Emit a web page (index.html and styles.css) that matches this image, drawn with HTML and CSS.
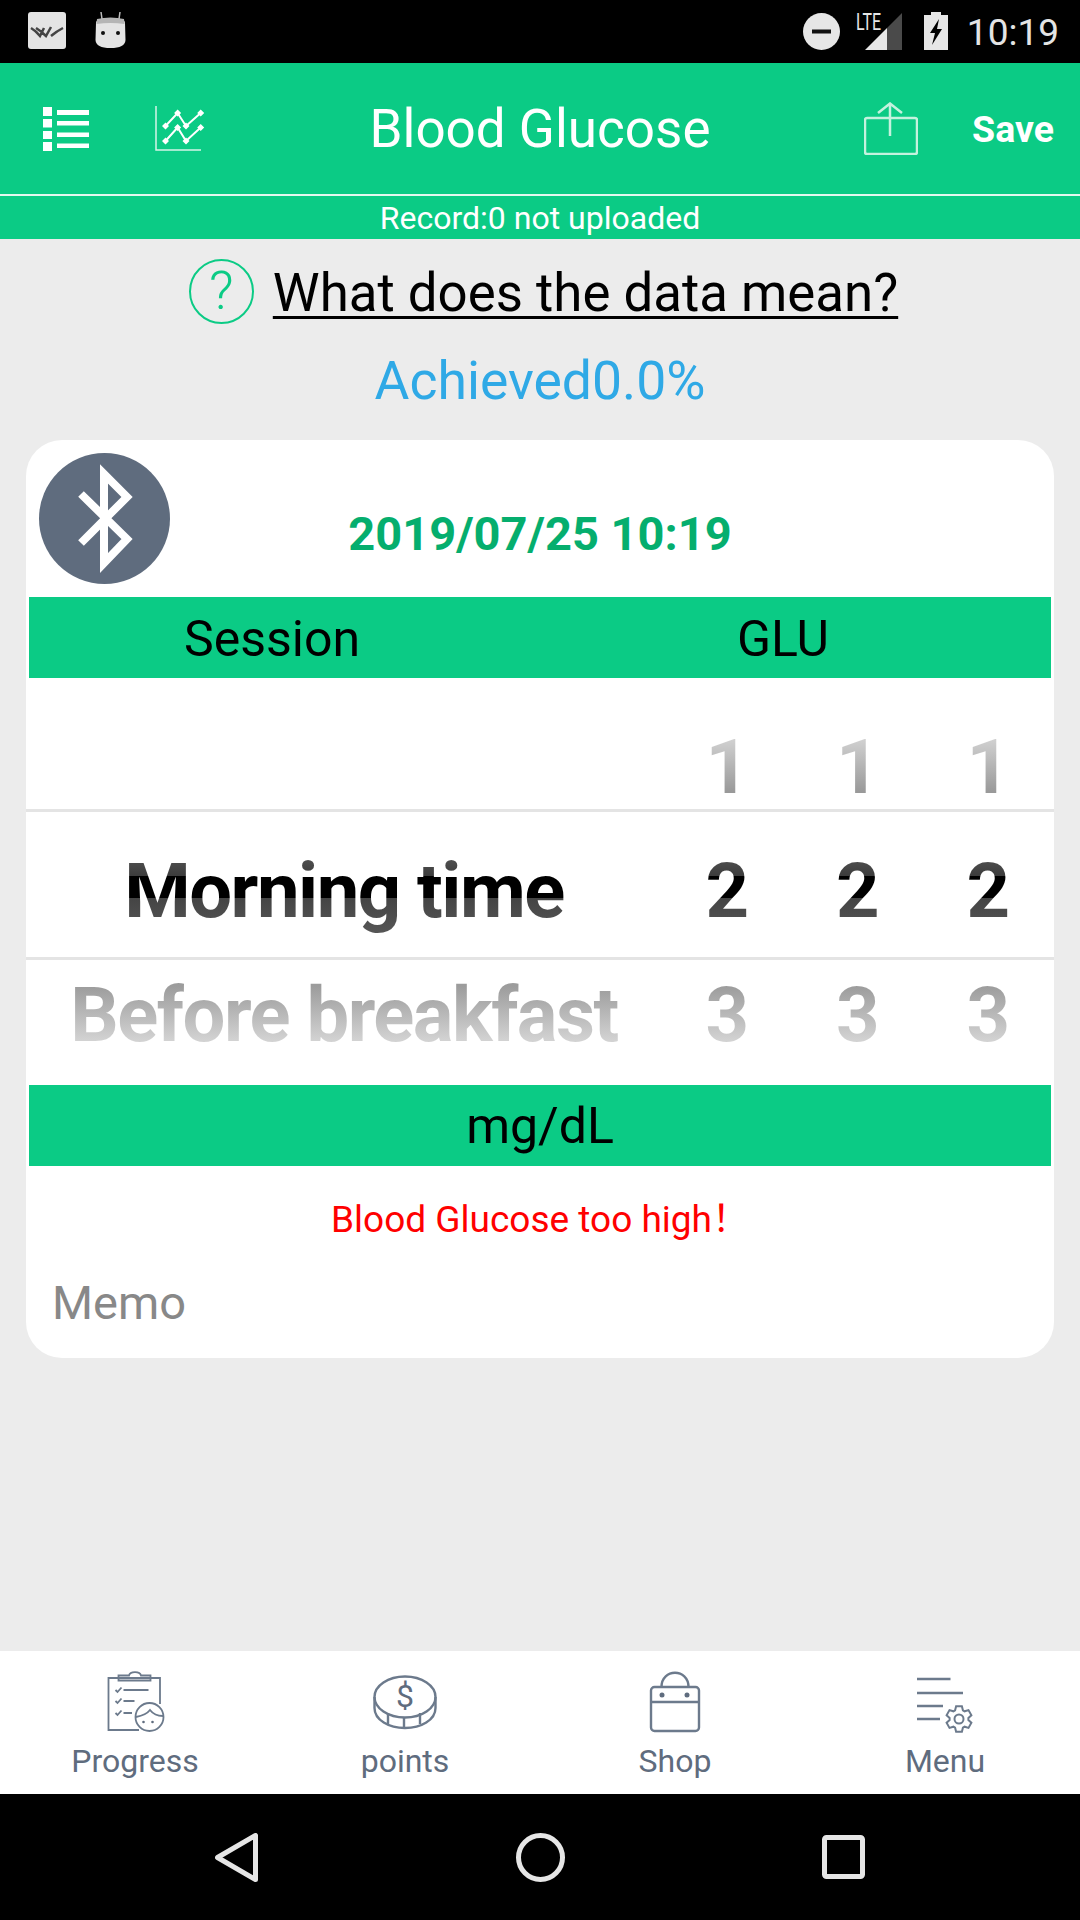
FILE: index.html
```html
<!DOCTYPE html>
<html lang="en">
<head>
    <meta charset="UTF-8">
    <meta name="viewport" content="width=device-width, initial-scale=1.0">
    <title>Blood Glucose</title>
    <link rel="stylesheet" href="styles.css">
</head>
<body>
<div class="app">

    <div class="statusbar">
        <div class="status-left">
            <svg width="38" height="37" viewBox="0 0 38 37">
                <rect width="38" height="37" rx="3" fill="#e4e4e4"/>
                <path d="M3 16 Q8 19 12 24 L16 16 M8 16 Q13 19 18 24 L23 15 M23 24 Q29 19 35 16" fill="none" stroke="#444" stroke-width="2.500"/>
            </svg>
            <svg width="31" height="36" viewBox="0 0 31 36">
                <path d="M7 7 L6 0 M24 7 L25 0" stroke="#bbb" stroke-width="1.500"/>
                <path d="M1 11 Q1 6 15.500 6 Q30 6 30 11 L30.500 28 Q30 36 15.500 36 Q1 36 0.500 28 Z" fill="#e4e4e4"/>
                <path d="M2 7 Q15.500 4 29 7 L29.500 12 Q15.500 10 1.500 12 Z" fill="#b5b5b5"/>
                <circle cx="8" cy="21" r="2" fill="#111"/>
                <circle cx="23" cy="21" r="2" fill="#111"/>
            </svg>
        </div>
        <div class="status-right">
            <svg class="st-dnd" width="37" height="37" viewBox="0 0 37 37">
                <circle cx="18.500" cy="18.500" r="18.500" fill="#e6e6e6"/>
                <rect x="9" y="16.500" width="19" height="4" fill="#111"/>
            </svg>
            <svg class="st-signal" width="46" height="44" viewBox="0 -6 46 44">
                <text x="0" y="17" class="lte" textLength="25" lengthAdjust="spacingAndGlyphs">LTE</text>
                <path d="M9 37 L31 15 V37 Z" fill="#e6e6e6"/>
                <path d="M31 15 L46 0 V37 H31 Z" fill="#4a4a4a"/>
            </svg>
            <svg class="st-battery" width="24" height="38" viewBox="0 0 24 38">
                <path d="M7 0 H17 V3 H24 V38 H0 V3 H7 Z" fill="#e6e6e6"/>
                <path d="M15 7 L6 21 H11 L8 33 L18 17 H13 Z" fill="#000"/>
            </svg>
            <span class="st-time">10:19</span>
        </div>
    </div>

    <div class="toolbar">
        <div class="toolbar-left">
            <svg width="46" height="44" viewBox="0 0 46 44" fill="#fff">
                <rect x="0" y="0" width="9" height="9"/>
                <rect x="0" y="12" width="9" height="8.500"/>
                <rect x="0" y="24" width="9" height="8"/>
                <rect x="0" y="35" width="9" height="9"/>
                <rect x="14" y="3" width="32" height="5"/>
                <rect x="14" y="14" width="32" height="4.500"/>
                <rect x="14" y="25.500" width="32" height="4.500"/>
                <rect x="14" y="36.500" width="32" height="4.500"/>
            </svg>
            <svg width="50" height="45" viewBox="0 0 50 45">
                <path d="M1 0 V44 H46" fill="none" stroke="#d5f5e8" stroke-width="1.500"/>
                <path d="M10.500 20 L22.600 7 L31 20 L45.700 7 M10.500 35 L22.600 21.500 L31 35 L45.700 21.500" fill="none" stroke="#fff" stroke-width="2"/>
                <path d="M10.500 16.500 l3.500 3.500 -3.500 3.500 -3.500 -3.500 Z M22.600 3.500 l3.500 3.500 -3.500 3.500 -3.500 -3.500 Z M31 16.500 l3.500 3.500 -3.500 3.500 -3.500 -3.500 Z M45.700 3.500 l3.500 3.500 -3.500 3.500 -3.500 -3.500 Z M10.500 31.500 l3.500 3.500 -3.500 3.500 -3.500 -3.500 Z M22.600 18 l3.500 3.500 -3.500 3.500 -3.500 -3.500 Z M31 31.500 l3.500 3.500 -3.500 3.500 -3.500 -3.500 Z M45.700 18 l3.500 3.500 -3.500 3.500 -3.500 -3.500 Z" fill="#fff"/>
            </svg>
        </div>
        <div class="toolbar-title">Blood Glucose</div>
        <div class="toolbar-right">
            <svg width="54" height="53" viewBox="0 0 54 53">
                <rect x="1" y="16" width="52" height="36" rx="2" fill="none" stroke="#c4f2de" stroke-width="2.500"/>
                <path d="M26 2 V34 M14 11 L26 1.500 L38 11" fill="none" stroke="#c4f2de" stroke-width="2.500"/>
            </svg>
            <span class="save">Save</span>
        </div>
    </div>
    <div class="subbar">Record:0 not uploaded</div>

    <div class="main">
        <div class="help-row">
            <span class="help-icon">?</span>
            <span class="help-text">What does the data mean?</span>
        </div>
        <div class="achieved">Achieved0.0%</div>

        <div class="card">
            <div class="card-head">
                <div class="bt-badge">
                    <svg width="131" height="131" viewBox="0 0 131 131">
                        <circle cx="65.500" cy="65.500" r="65.500" fill="#5f6c7e"/>
                        <path d="M42 41 L88 86 L65 110 V21 L88 44 L42 90" fill="none" stroke="#fff" stroke-width="8"/>
                    </svg>
                </div>
                <div class="date">2019/07/25 10:19</div>
            </div>

            <div class="band band-split">
                <span>Session</span>
                <span>GLU</span>
            </div>

            <div class="wheel">
                <div class="wheel-line line-a"></div>
                <div class="wheel-line line-b"></div>
                <div class="wheel-row">
                    <span></span>
                    <span><span class="fade-top">1</span></span>
                    <span><span class="fade-top">1</span></span>
                    <span><span class="fade-top">1</span></span>
                </div>
                <div class="wheel-row">
                    <span class="wheel-name"><span class="fade-mid">Morning time</span></span>
                    <span><span class="fade-mid">2</span></span>
                    <span><span class="fade-mid">2</span></span>
                    <span><span class="fade-mid">2</span></span>
                </div>
                <div class="wheel-row">
                    <span class="wheel-name"><span class="fade-low">Before breakfast</span></span>
                    <span><span class="fade-low">3</span></span>
                    <span><span class="fade-low">3</span></span>
                    <span><span class="fade-low">3</span></span>
                </div>
            </div>

            <div class="band">mg/dL</div>
            <div class="warning">Blood Glucose too high！</div>
            <div class="memo">Memo</div>
        </div>
    </div>

    <div class="tabbar">
        <div class="tab">
            <svg width="64" height="64" viewBox="0 0 64 64" class="tab-icon">
                <path d="M57 34 V8 H5.500 V60 H36"/>
                <path d="M15.500 5.500 H26 C27 1 37 1 38 5.500 H47.500 V10.500 H15.500 Z"/>
                <path d="M12.500 20 L14.500 22 L18.500 17.500 M12.500 31 L14.500 33 L18.500 28.500 M12.500 43 L14.500 45 L18.500 40.500"/>
                <path d="M20.500 20 H45.500 M20.500 31 H31.500 M20.500 43 H29"/>
                <circle cx="46.500" cy="47" r="14"/>
                <path d="M33 47 C38 46 44 44 47 40 C50 44 55 46 60 46"/>
                <circle class="dot" cx="40.500" cy="52" r="1.300"/>
                <circle class="dot" cx="49.500" cy="52" r="1.300"/>
            </svg>
            <span class="tab-label">Progress</span>
        </div>
        <div class="tab">
            <svg width="64" height="64" viewBox="0 0 64 64" class="tab-icon heavy">
                <ellipse cx="32" cy="27" rx="30.500" ry="20.500"/>
                <path d="M1.500 27 V38 C1.500 50 16 58 32 58 C48 58 62.500 50 62.500 38 V27"/>
                <path d="M15 43 V54 M31 47.500 V58 M47 43 V54"/>
                <text x="32" y="37" class="coin-sign" text-anchor="middle">$</text>
            </svg>
            <span class="tab-label">points</span>
        </div>
        <div class="tab">
            <svg width="64" height="64" viewBox="0 0 64 64" class="tab-icon heavy">
                <rect x="8" y="17" width="48" height="44" rx="3.500"/>
                <path d="M8 32 H56"/>
                <path d="M18.500 17 C18.500 -2 45.500 -2 45.500 17"/>
                <circle class="dot" cx="19" cy="25" r="2.500"/>
                <circle class="dot" cx="44" cy="25" r="2.500"/>
            </svg>
            <span class="tab-label">Shop</span>
        </div>
        <div class="tab">
            <svg width="64" height="64" viewBox="0 0 64 64" class="tab-icon heavy">
                <path d="M4 9 H37.500 M4 23 H50 M4 36 H30 M4 49 H27"/>
                <g transform="translate(46 49)" class="thin">
                    <path d="M-2.900 -12.700 L2.900 -12.700 L3.900 -8.700 L5.600 -7.700 L9.500 -8.900 L12.400 -3.800 L9.400 -1 L9.400 1 L12.400 3.800 L9.500 8.900 L5.600 7.700 L3.900 8.700 L2.900 12.700 L-2.900 12.700 L-3.900 8.700 L-5.600 7.700 L-9.500 8.900 L-12.400 3.800 L-9.400 1 L-9.400 -1 L-12.400 -3.800 L-9.500 -8.900 L-5.600 -7.700 L-3.900 -8.700 Z"/>
                    <circle r="4.500"/>
                </g>
            </svg>
            <span class="tab-label">Menu</span>
        </div>
    </div>

    <div class="sysnav">
        <svg width="43" height="49" viewBox="0 0 43 49">
            <path d="M40.500 2.500 V46.500 L2.500 24.500 Z" fill="none" stroke="#e6e6e6" stroke-width="5" stroke-linejoin="round"/>
        </svg>
        <svg width="49" height="49" viewBox="0 0 49 49">
            <circle cx="24.500" cy="24.500" r="22" fill="none" stroke="#e6e6e6" stroke-width="5"/>
        </svg>
        <svg width="43" height="44" viewBox="0 0 43 44">
            <rect x="2.500" y="2.500" width="38" height="39" rx="2" fill="none" stroke="#e6e6e6" stroke-width="5"/>
        </svg>
    </div>

</div>
</body>
</html>
```

FILE: styles.css
```css
* {
    box-sizing: border-box;
}
body {
    margin: 0;
    background-color: black;
    font-family: Roboto, "Noto Sans CJK SC", sans-serif;
}
svg {
    display: block;
}
.app {
    width: 1080px;
    height: 1920px;
    display: flex;
    flex-direction: column;
}

/* status bar */
.statusbar {
    height: 63px;
    flex: none;
    background-color: black;
    display: flex;
    justify-content: space-between;
    padding: 12px 21px 0 28px;
}
.status-left {
    display: flex;
    gap: 29px;
    align-items: flex-start;
}
.status-right {
    display: flex;
    align-items: flex-start;
}
.st-dnd {
    margin-top: 1px;
}
.st-signal {
    margin-left: 16px;
    margin-top: -5px;
}
.st-battery {
    margin-left: 22px;
}
.st-time {
    margin-left: 19px;
    font-size: 37px;
    line-height: 42px;
    color: #e4e4e4;
}
.lte {
    font-family: Roboto, sans-serif;
    font-size: 24px;
    fill: #e6e6e6;
}

/* toolbar */
.toolbar {
    height: 133px;
    flex: none;
    background-color: #0bcb85;
    border-bottom: 2px solid #e4f8ef;
    display: grid;
    grid-template-columns: 1fr auto 1fr;
    align-items: center;
}
.toolbar-left {
    display: flex;
    align-items: center;
    gap: 66px;
    padding-left: 43px;
}
.toolbar-title {
    font-size: 53px;
    color: white;
    padding-top: 1px;
}
.toolbar-right {
    display: flex;
    align-items: center;
    justify-content: flex-end;
    gap: 54px;
    padding-right: 26px;
}
.save {
    font-size: 37.500px;
    font-weight: bold;
    color: white;
}
.subbar {
    height: 43px;
    flex: none;
    background-color: #0bcb85;
    color: white;
    font-size: 32px;
    line-height: 44px;
    text-align: center;
}

/* main area */
.main {
    flex: 1;
    background-color: #ececec;
    padding: 20px 26px 0;
}
.help-row {
    display: flex;
    justify-content: center;
    align-items: center;
    gap: 19px;
    height: 65px;
    padding-left: 7px;
}
.help-icon {
    width: 65px;
    height: 65px;
    border: 2.500px solid #0bcb85;
    border-radius: 50%;
    color: #0bcb85;
    font-size: 54px;
    font-weight: 300;
    line-height: 60px;
    text-align: center;
}
.help-text {
    font-size: 52.800px;
    color: black;
    padding-top: 2px;
    text-decoration: underline;
    text-decoration-thickness: 3px;
    text-underline-offset: 5px;
}
.achieved {
    margin-top: 26px;
    font-size: 53.500px;
    line-height: 61px;
    text-align: center;
    color: #2fa9e6;
}

/* card */
.card {
    margin-top: 29px;
    height: 918px;
    background-color: white;
    border-radius: 36px;
    overflow: hidden;
}
.card-head {
    height: 157px;
    display: grid;
    grid-template-columns: 1fr auto 1fr;
}
.bt-badge {
    padding: 13px 0 0 13px;
}
.date {
    grid-column: 2;
    font-size: 47px;
    font-weight: bold;
    line-height: 54px;
    color: #05ae6e;
    padding-top: 67px;
}
.band {
    height: 81px;
    margin: 0 3px;
    background-color: #0bcb85;
    color: black;
    font-size: 50px;
    line-height: 83px;
    text-align: center;
}
.band-split {
    display: grid;
    grid-template-columns: 486px 1fr;
    line-height: 85px;
}

/* picker wheel */
.wheel {
    position: relative;
    height: 407px;
    padding: 27px 0 0 4px;
}
.wheel-line {
    position: absolute;
    left: 0;
    right: 0;
    height: 3px;
    background-color: #e4e4e4;
}
.line-a {
    top: 131px;
}
.line-b {
    top: 279px;
}
.wheel-row {
    display: grid;
    grid-template-columns: 632px repeat(3, 130.5px);
    height: 124px;
    line-height: 124px;
    font-size: 76px;
    font-weight: bold;
    text-align: center;
}
.wheel-name {
    letter-spacing: -1.500px;
    padding-right: 4px;
}
.fade-top,
.fade-mid,
.fade-low {
    color: transparent;
    -webkit-background-clip: text;
    background-clip: text;
}
.fade-top {
    background-image: linear-gradient(#d2d2d2 16px, #999 70px);
}
.fade-mid {
    background-image: linear-gradient(#4c4c4c 16px, #3c3c3c 30px, black 30px, black 52px, #444 52px, #555 85px);
}
.fade-low {
    background-image: linear-gradient(#9c9c9c 16px, #d2d2d2 70px);
}

.warning {
    margin-top: 32px;
    font-size: 37px;
    line-height: 44px;
    text-align: center;
    color: #ff0000;
}
.memo {
    margin-top: 35px;
    padding-left: 26px;
    font-size: 47px;
    line-height: 52px;
    color: #888;
}

/* bottom tabs */
.tabbar {
    height: 143px;
    flex: none;
    background-color: white;
    display: grid;
    grid-template-columns: repeat(4, 1fr);
    padding-top: 19px;
}
.tab {
    display: flex;
    flex-direction: column;
    align-items: center;
}
.tab-icon {
    fill: none;
    stroke: #6c7a8c;
    stroke-width: 1.800;
}
.tab-icon.heavy {
    stroke-width: 2.400;
}
.tab-icon .thin {
    stroke-width: 2;
}
.tab-icon .dot {
    fill: #5f6c7e;
    stroke: none;
}
.coin-sign {
    font-family: Roboto, sans-serif;
    font-size: 32px;
    fill: #5f6c7e;
    stroke: none;
}
.tab-label {
    font-size: 32px;
    line-height: 36px;
    margin-top: 9px;
    color: #5f6c7e;
}

/* android nav */
.sysnav {
    height: 126px;
    flex: none;
    background-color: black;
    display: flex;
    align-items: center;
    justify-content: space-between;
    padding: 0 215px 0 215px;
}
```
